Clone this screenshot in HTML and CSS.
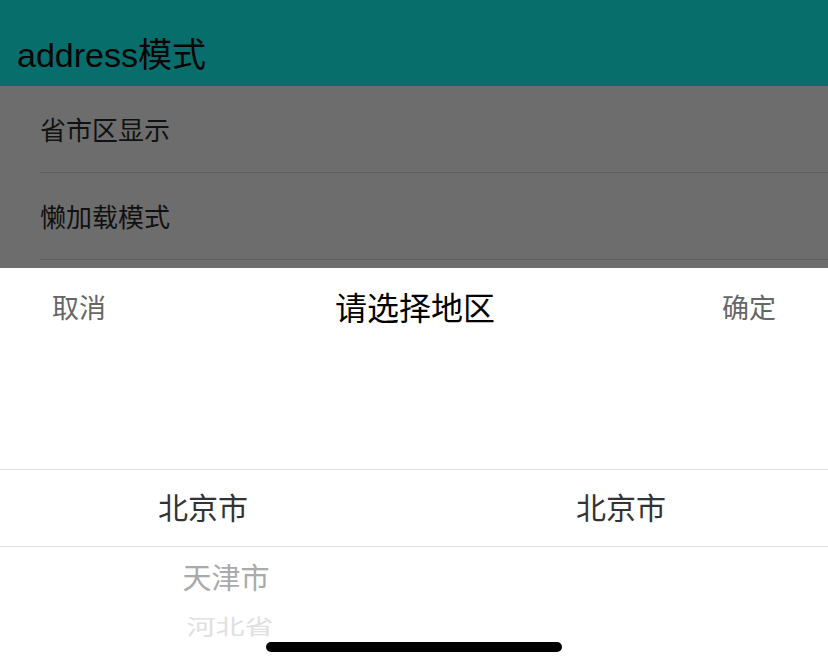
FILE: index.html
```html
<!DOCTYPE html>
<html lang="zh-CN">
<head>
<meta charset="utf-8">
<title>address模式</title>
<link rel="stylesheet" href="styles.css">
</head>
<body>
<div class="screen">
  <header class="appbar">
    <h1 class="appbar-title">address模式</h1>
  </header>
  <ul class="menu">
    <li class="menu-item">省市区显示</li>
    <li class="menu-item">懒加载模式</li>
  </ul>
  <section class="sheet">
    <div class="sheet-head">
      <span class="sheet-btn">取消</span>
      <span class="sheet-title">请选择地区</span>
      <span class="sheet-btn">确定</span>
    </div>
    <div class="picker">
      <div class="picker-top"></div>
      <div class="picker-sel">
        <div class="col col-left">北京市</div>
        <div class="col col-right">北京市</div>
      </div>
      <div class="picker-rest">
        <div class="col col-left">
          <div class="opt opt-1">天津市</div>
          <div class="opt opt-2">河北省</div>
        </div>
        <div class="col col-right"></div>
      </div>
    </div>
    <div class="home-indicator"></div>
  </section>
</div>
</body>
</html>
```
FILE: styles.css
```css
* { box-sizing: border-box; }
html, body {
  margin: 0;
  padding: 0;
  background: #ffffff;
}
body {
  font-family: "Liberation Sans", "Noto Sans CJK SC", sans-serif;
}
.screen {
  width: 828px;
  height: 668px;
  display: flex;
  flex-direction: column;
  overflow: hidden;
  position: relative;
}
.appbar {
  height: 86px;
  flex: none;
  background: #076e6c;
  display: flex;
  align-items: flex-end;
  padding: 0 0 11px 17px;
}
.appbar-title {
  margin: 0;
  font-weight: normal;
  font-size: 34px;
  line-height: 40px;
  color: #050505;
}
.menu {
  list-style: none;
  margin: 0;
  padding: 0 0 0 40px;
  background: #6d6d6d;
  height: 182px;
  flex: none;
}
.menu-item {
  height: 87px;
  display: flex;
  align-items: center;
  border-bottom: 1px solid #5d5d5d;
  font-size: 26px;
  color: #111111;
  font-family: "Noto Sans CJK SC", sans-serif;
  padding-bottom: 2px;
}
.sheet {
  flex: 1;
  background: #ffffff;
  display: flex;
  flex-direction: column;
  font-family: "Noto Sans CJK SC", sans-serif;
}
.sheet-head {
  height: 80px;
  flex: none;
  display: flex;
  align-items: center;
  justify-content: space-between;
  padding: 0 52px 4px;
}
.sheet-btn {
  font-size: 27px;
  color: #666666;
}
.sheet-title {
  font-size: 32px;
  color: #000000;
  margin-left: 2px;
}
.picker {
  flex: 1;
  display: flex;
  flex-direction: column;
}
.picker-top {
  height: 121px;
  flex: none;
}
.picker-sel {
  height: 78px;
  flex: none;
  border-top: 1px solid #e2e2e2;
  border-bottom: 1px solid #e2e2e2;
  display: flex;
  align-items: center;
  font-size: 30px;
  color: #333333;
  padding-bottom: 4px;
}
.col {
  width: 414px;
  text-align: center;
}
.col-left { padding-right: 8px; }
.picker-rest {
  display: flex;
}
.opt {
  font-size: 29px;
}
.opt-1 {
  height: 58px;
  line-height: 58px;
  color: #aaaaaa;
  transform: translateX(23px);
}
.opt-2 {
  height: 40px;
  line-height: 40px;
  color: #e0e0e0;
  transform: translateX(27px) scaleY(0.72);
}
.home-indicator {
  position: absolute;
  left: 266px;
  top: 642px;
  width: 296px;
  height: 10px;
  border-radius: 5px;
  background: #000000;
}
```
